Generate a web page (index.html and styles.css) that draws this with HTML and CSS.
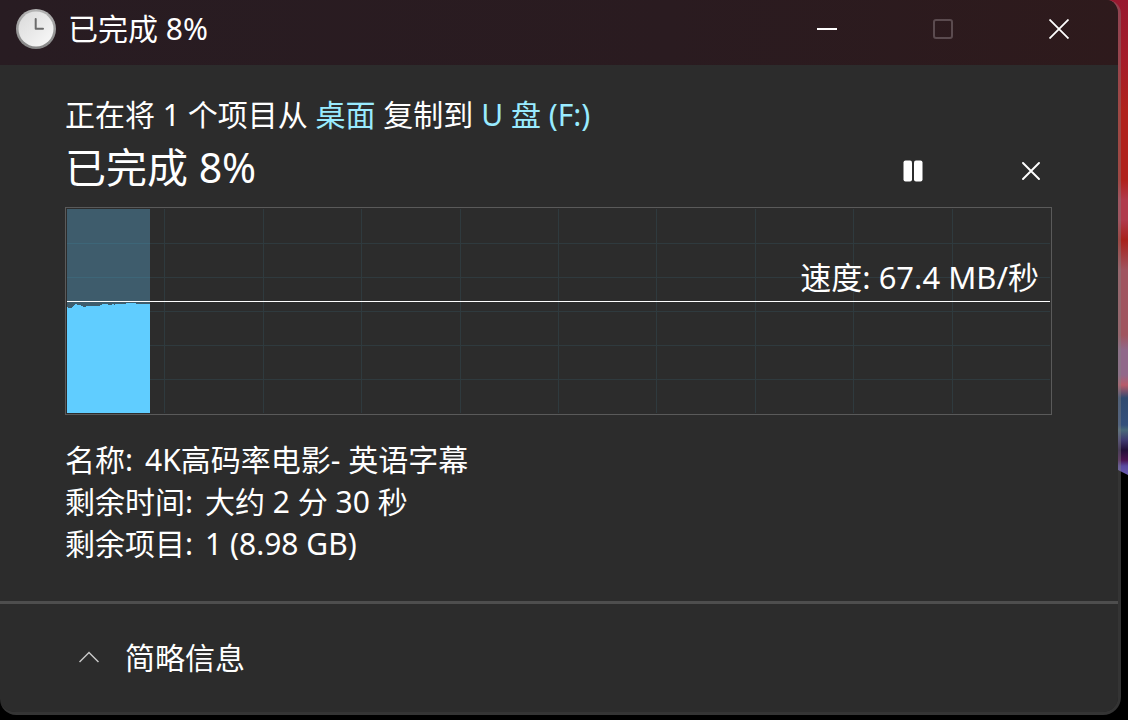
FILE: index.html
```html
<!DOCTYPE html>
<html lang="zh-CN">
<head>
    <meta charset="UTF-8">
    <meta name="viewport" content="width=device-width, initial-scale=1.0">
    <title>已完成 8%</title>
    <link rel="stylesheet" href="styles.css">
</head>
<body>
    <div class="wallpaper"></div>
    <div class="window">
        <header class="titlebar">
            <svg class="clock" viewBox="0 0 40 40" aria-hidden="true">
                <defs>
                    <linearGradient id="rim" x1="0" y1="0" x2="0" y2="1">
                        <stop offset="0" stop-color="#b4b4b4"/>
                        <stop offset="1" stop-color="#858585"/>
                    </linearGradient>
                    <linearGradient id="face" x1="0" y1="0" x2="1" y2="1">
                        <stop offset="0" stop-color="#d9d9d9"/>
                        <stop offset="1" stop-color="#fafafa"/>
                    </linearGradient>
                </defs>
                <circle cx="20" cy="20" r="20" fill="url(#rim)"/>
                <circle cx="20" cy="20" r="17.5" fill="url(#face)"/>
                <path d="M19.7 10v9.7H27" fill="none" stroke="#6b6b6b" stroke-width="2" stroke-linecap="round" stroke-linejoin="round"/>
            </svg>
            <span class="window-title">已完成 8%</span>
            <div class="window-buttons">
                <button type="button" aria-label="最小化">
                    <svg width="20" height="20" viewBox="0 0 20 20"><path d="M0 10h20" stroke="#fff" stroke-width="2"/></svg>
                </button>
                <button type="button" aria-label="最大化" disabled>
                    <svg width="20" height="20" viewBox="0 0 20 20"><rect x="1" y="1" width="18" height="18" rx="2" fill="none" stroke="#5b4b4f" stroke-width="2"/></svg>
                </button>
                <button type="button" aria-label="关闭">
                    <svg width="20" height="20" viewBox="0 0 20 20"><path d="M.5 .5l19 19M19.5 .5l-19 19" stroke="#fff" stroke-width="1.8"/></svg>
                </button>
            </div>
        </header>

        <main class="content">
            <p class="summary">正在将 1 个项目从 <a href="#">桌面</a> 复制到 <a href="#">U 盘 (F:)</a></p>
            <div class="status">
                <h1>已完成 8%</h1>
                <div class="actions">
                    <button type="button" aria-label="暂停">
                        <svg width="20" height="22" viewBox="0 0 20 22" fill="#fff"><rect x="0.5" y="0.5" width="8.5" height="21" rx="2"/><rect x="11" y="0.5" width="8.5" height="21" rx="2"/></svg>
                    </button>
                    <button type="button" aria-label="取消">
                        <svg width="18" height="18" viewBox="0 0 18 18"><path d="M1 1l16 16M17 1L1 17" stroke="#fff" stroke-width="1.9" stroke-linecap="round"/></svg>
                    </button>
                </div>
            </div>

            <div class="chart">
                <svg viewBox="0 0 983 204" preserveAspectRatio="none" shape-rendering="crispEdges" aria-hidden="true">
                    <path class="grid" d="M97.5 0v204M196.5 0v204M294.5 0v204M393.5 0v204M491.5 0v204M589.5 0v204M688.5 0v204M786.5 0v204M885.5 0v204"/>
                    <rect width="83" height="204" fill="#3e5c6c"/>
                    <path class="grid" d="M83 34.5h900M83 68.5h900M83 102.5h900M83 136.5h900M83 170.5h900"/>
                    <path class="grid-done" d="M0 34.5h83M0 68.5h83"/>
                    <path class="speed" d="M0 204V98h1v1h4v-1h1v-1h1v-1h1v-1h2v1h4v1h2v1h3v-1h14v-1h2v-1h6v1h4v-1h2v1h1v-1h11v-1h10v1h14v109z"/>
                    <path class="average" d="M0 92.5h983"/>
                </svg>
                <span class="chart-label">速度: 67.4 MB/秒</span>
            </div>

            <dl class="details">
                <div><dt>名称:</dt><dd>4K高码率电影- 英语字幕</dd></div>
                <div><dt>剩余时间:</dt><dd>大约 2 分 30 秒</dd></div>
                <div><dt>剩余项目:</dt><dd>1 (8.98 GB)</dd></div>
            </dl>
        </main>

        <footer class="footer">
            <button type="button" class="toggle">
                <svg width="20" height="12" viewBox="0 0 20 12"><path d="M.5 11L10 1.5 19.5 11" fill="none" stroke="#c8c8c8" stroke-width="1.5"/></svg>
                简略信息
            </button>
        </footer>
    </div>
</body>
</html>
```
FILE: styles.css
```css
* {
    box-sizing: border-box;
}

body {
    margin: 0;
    background: #000;
    color: #fff;
    font-family: "Noto Sans", "Noto Sans CJK SC", sans-serif;
    font-size: 30px;
    line-height: 42px;
    overflow: hidden;
}

p,
dl,
dd,
h1 {
    margin: 0;
    font-weight: 400;
}

a {
    color: #99ebff;
    text-decoration: none;
}

button {
    display: flex;
    align-items: center;
    justify-content: center;
    padding: 0;
    border: 0;
    background: none;
    color: inherit;
    font: inherit;
}

svg {
    display: block;
}

.wallpaper {
    position: absolute;
    top: 0;
    right: 0;
    width: 100%;
    height: 475px;
    background: linear-gradient(#97182f 0, #a51c2a 60px, #b0221c 110px, #b0221c 180px, #b03a4c 200px, #b03a4c 220px, #a8221c 240px, #a05560 270px, #a0555f 335px, #91688a 350px, #91688a 375px, #b85a6a 385px, #304a70 398px, #35507c 425px, #4a6a7a 430px, #3f3a70 440px, #220f38 450px, #4a1450 460px, #5a4aa0 466px, #6a5cb0 475px);
    clip-path: polygon(0 0, 100% 0, 100% 100%, calc(100% - 10px) 470px, 0 470px);
}

.window {
    position: relative;
    margin-right: 7px;
    border: solid rgba(130, 130, 130, 0.4);
    border-width: 0 3px 3px 0;
    border-radius: 0 14px 18px 16px;
    background: #2c2c2c;
    background-clip: padding-box;
    overflow: hidden;
}

.titlebar {
    display: flex;
    align-items: center;
    height: 65px;
    padding: 0 1px 7px 16px;
    background: linear-gradient(90deg, #281c22, #2a1b20 60%, #2e1a1c);
}

.clock {
    width: 40px;
    height: 40px;
    margin-right: 12px;
}

.window-buttons {
    display: flex;
    margin-left: auto;
}

.window-buttons button {
    width: 116px;
    height: 58px;
}

.content {
    padding: 29px 66px 34px 65px;
}

.status {
    display: flex;
    align-items: center;
    justify-content: space-between;
    height: 71px;
}

h1 {
    font-size: 41px;
    line-height: 56px;
    padding-bottom: 10px;
}

.actions {
    display: flex;
    margin-right: -38px;
    padding-bottom: 2px;
}

.actions button {
    width: 118px;
    height: 60px;
}

.chart {
    position: relative;
    padding: 1px;
    border: 1px solid #5a5a5a;
}

.chart svg {
    width: 100%;
    height: 204px;
}

.grid {
    stroke: #2f3a3e;
}

.grid-done {
    stroke: #3d6678;
}

.speed {
    fill: #60cdff;
}

.average {
    stroke: #fff;
}

.chart-label {
    position: absolute;
    top: 48px;
    right: 12px;
    font-size: 31px;
}

.details {
    padding-top: 24px;
}

.details div {
    display: flex;
    gap: 12px;
}

.content {
    padding-bottom: 36px;
}

.footer {
    padding: 33px 79px;
    border-top: 3px solid #4e4e4e;
}

.toggle {
    gap: 26px;
}

.toggle svg {
    margin-bottom: 2px;
}
```
